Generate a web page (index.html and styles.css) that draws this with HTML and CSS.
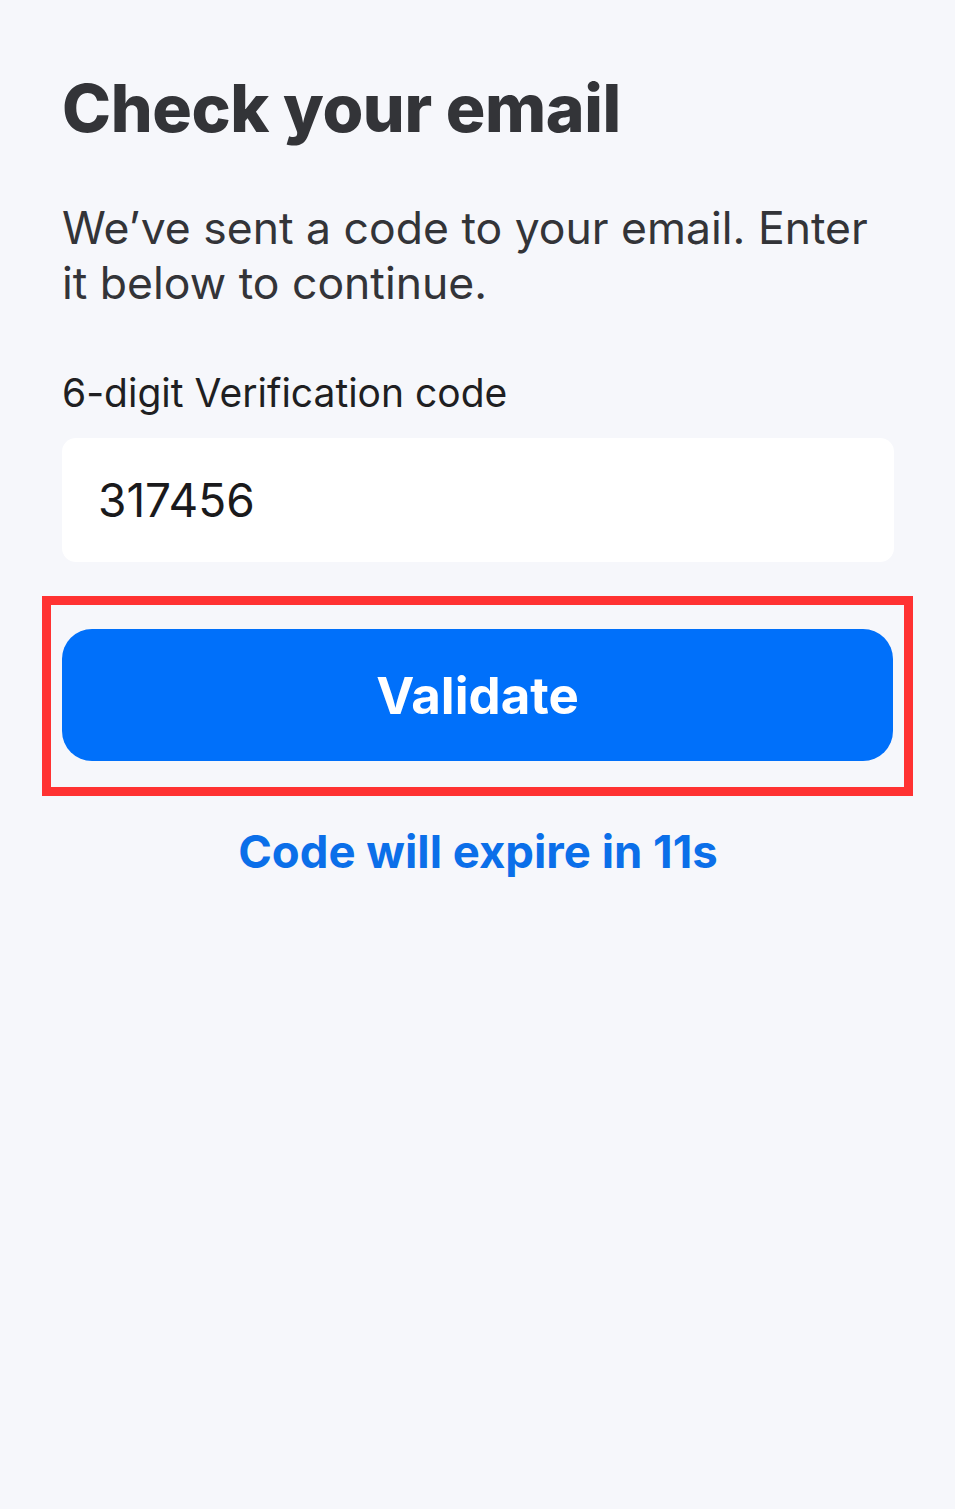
FILE: index.html
```html
<!DOCTYPE html>
<html lang="en">
<head>
  <meta charset="UTF-8" />
  <meta name="viewport" content="width=device-width, initial-scale=1.0" />
  <title>Check your email</title>
  <link rel="stylesheet" href="styles.css">
</head>
<body>
  <main class="verify">
    <h1 class="title">Check your email</h1>
    <p class="lead">We’ve sent a code to your email. Enter it below to continue.</p>

    <label class="field-label" for="code">6-digit Verification code</label>
    <input class="code-input" id="code" type="text" value="317456" />

    <div class="highlight">
      <button class="validate">Validate</button>
    </div>

    <p class="expire">Code will expire in 11s</p>
  </main>
</body>
</html>
```

FILE: styles.css
```css
:root {
  --bg-color: #f6f7fb;
  --text-color: #333438;
  --primary: #0070fa;
  --link: #0b6fe9;
  --highlight: #ff3232;
}

* {
  box-sizing: border-box;
}

body {
  margin: 0;
  background: var(--bg-color);
  color: var(--text-color);
  font-family: Inter, 'Noto Sans', sans-serif;
  min-height: 100vh;
}

.verify {
  display: flex;
  flex-direction: column;
  padding: 76px 61px 0 62px;
}

.title {
  margin: 0;
  font-size: 66px;
  line-height: 64px;
  font-weight: 800;
  letter-spacing: -0.006em;
  color: #333438;
}

.lead {
  margin: 61px 0 0;
  font-size: 44.5px;
  line-height: 55px;
  font-weight: 400;
  max-width: 830px;
}

.field-label {
  margin-top: 59px;
  font-size: 39px;
  line-height: 46px;
  color: #1f1f22;
}

.code-input {
  margin-top: 22px;
  height: 124px;
  width: 100%;
  border: none;
  border-radius: 14px;
  background: #ffffff;
  padding: 0 36px;
  font-family: Inter, 'Noto Sans', sans-serif;
  font-size: 46px;
  color: #1a1a1c;
  outline: none;
}

.highlight {
  margin: 34px -19px 0 -20px;
  border: 9px solid var(--highlight);
  padding: 24px 11px 26px;
}

.validate {
  display: block;
  width: 100%;
  height: 132px;
  border: none;
  border-radius: 30px;
  background: var(--primary);
  color: #ffffff;
  font-family: Inter, 'Noto Sans', sans-serif;
  font-size: 51px;
  font-weight: 700;
  cursor: pointer;
}

.expire {
  margin: 28px 0 0;
  text-align: center;
  font-size: 45.5px;
  line-height: 56px;
  font-weight: 700;
  color: var(--link);
}
```
